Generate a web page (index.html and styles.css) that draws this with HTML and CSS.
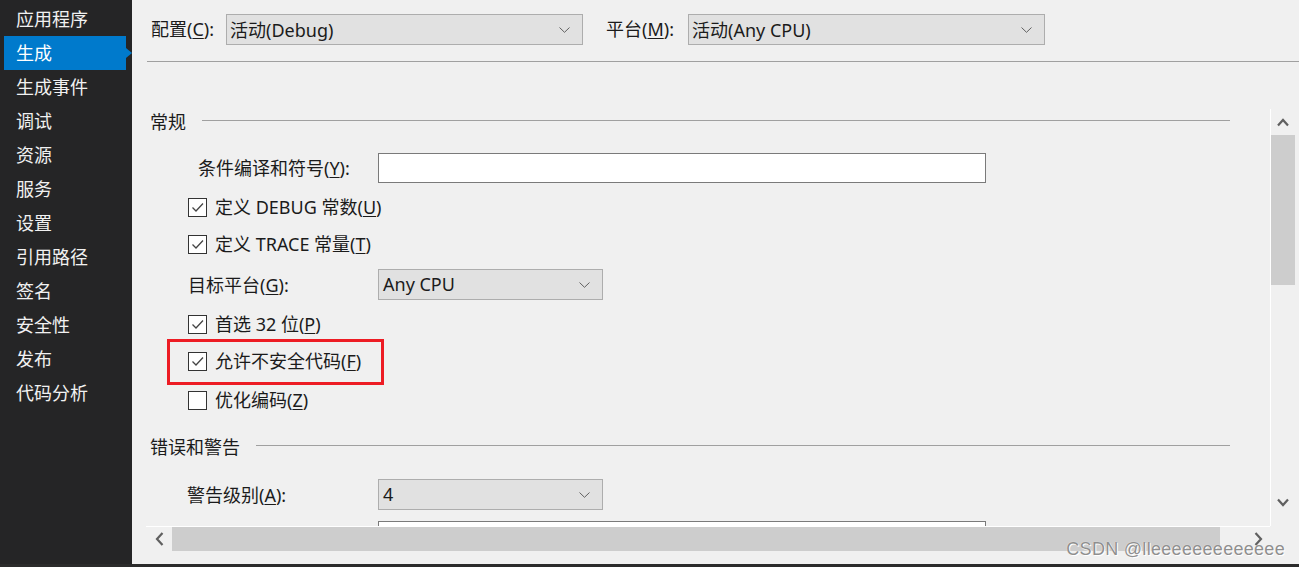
FILE: index.html
```html
<!DOCTYPE html>
<html lang="zh-CN">
<head>
<meta charset="utf-8">
<title>生成</title>
<link rel="stylesheet" href="styles.css">
</head>
<body>
<div class="window">
  <nav class="sidebar">
    <div class="nav-item">应用程序</div>
    <div class="nav-item active">生成</div>
    <div class="nav-item">生成事件</div>
    <div class="nav-item">调试</div>
    <div class="nav-item">资源</div>
    <div class="nav-item">服务</div>
    <div class="nav-item">设置</div>
    <div class="nav-item">引用路径</div>
    <div class="nav-item">签名</div>
    <div class="nav-item">安全性</div>
    <div class="nav-item">发布</div>
    <div class="nav-item">代码分析</div>
  </nav>
  <main class="main">
    <div class="topbar">
      <span class="top-label lbl-config">配置(<u>C</u>):</span>
      <div class="combo combo-top"><span>活动(Debug)</span><svg class="chev" width="11" height="6" viewBox="0 0 11 6"><polyline points="0.5,0.5 5.5,5.3 10.5,0.5" fill="none" stroke="#606060" stroke-width="1"/></svg></div>
      <span class="top-label lbl-platform">平台(<u>M</u>):</span>
      <div class="combo combo-top"><span>活动(Any CPU)</span><svg class="chev" width="11" height="6" viewBox="0 0 11 6"><polyline points="0.5,0.5 5.5,5.3 10.5,0.5" fill="none" stroke="#606060" stroke-width="1"/></svg></div>
    </div>
    <div class="sep"></div>
    <div class="frame">
      <div class="viewport">
        <div class="section"><span class="section-title">常规</span><span class="section-line"></span></div>
        <div class="row row-text">
          <span class="lbl lbl-define">条件编译和符号(<u>Y</u>):</span>
          <div class="textbox"></div>
        </div>
        <div class="row cb-row r-debug">
          <span class="cb checked"><svg width="17" height="17" viewBox="0 0 17 17"><polyline points="3.5,8.5 7,12 14,4.5" fill="none" stroke="#444" stroke-width="1.3"/></svg></span>
          <span class="cb-text">定义 DEBUG 常数(<u>U</u>)</span>
        </div>
        <div class="row cb-row r-trace">
          <span class="cb checked"><svg width="17" height="17" viewBox="0 0 17 17"><polyline points="3.5,8.5 7,12 14,4.5" fill="none" stroke="#444" stroke-width="1.3"/></svg></span>
          <span class="cb-text">定义 TRACE 常量(<u>T</u>)</span>
        </div>
        <div class="row row-combo r-target">
          <span class="lbl lbl-plain">目标平台(<u>G</u>):</span>
          <div class="combo combo-small"><span>Any CPU</span><svg class="chev" width="11" height="6" viewBox="0 0 11 6"><polyline points="0.5,0.5 5.5,5.3 10.5,0.5" fill="none" stroke="#606060" stroke-width="1"/></svg></div>
        </div>
        <div class="row cb-row r-prefer">
          <span class="cb checked"><svg width="17" height="17" viewBox="0 0 17 17"><polyline points="3.5,8.5 7,12 14,4.5" fill="none" stroke="#444" stroke-width="1.3"/></svg></span>
          <span class="cb-text">首选 32 位(<u>P</u>)</span>
        </div>
        <div class="row cb-row r-unsafe">
          <span class="cb checked"><svg width="17" height="17" viewBox="0 0 17 17"><polyline points="3.5,8.5 7,12 14,4.5" fill="none" stroke="#444" stroke-width="1.3"/></svg></span>
          <span class="cb-text">允许不安全代码(<u>F</u>)</span>
          <span class="highlight-box"></span>
        </div>
        <div class="row cb-row r-opt">
          <span class="cb"></span>
          <span class="cb-text">优化编码(<u>Z</u>)</span>
        </div>
        <div class="section section-2"><span class="section-title">错误和警告</span><span class="section-line"></span></div>
        <div class="row row-combo r-warn">
          <span class="lbl lbl-warn">警告级别(<u>A</u>):</span>
          <div class="combo combo-small"><span>4</span><svg class="chev" width="11" height="6" viewBox="0 0 11 6"><polyline points="0.5,0.5 5.5,5.3 10.5,0.5" fill="none" stroke="#606060" stroke-width="1"/></svg></div>
        </div>
        <div class="row row-text r-last">
          <span class="lbl lbl-empty"></span>
          <div class="textbox"></div>
        </div>
      </div>
      <div class="vscroll">
        <div class="arrow-box up"><svg width="12" height="9" viewBox="0 0 12 9"><polyline points="1,7.5 6,2 11,7.5" fill="none" stroke="#606060" stroke-width="2.2"/></svg></div>
        <div class="vthumb"></div>
        <div class="vtrack"></div>
        <div class="arrow-box down"><svg width="12" height="9" viewBox="0 0 12 9"><polyline points="1,1.5 6,7 11,1.5" fill="none" stroke="#606060" stroke-width="2.2"/></svg></div>
      </div>
    </div>
    <div class="hscroll">
      <div class="harrow left"><svg width="9" height="14" viewBox="0 0 9 14"><polyline points="7.5,1 2,7 7.5,13" fill="none" stroke="#606060" stroke-width="2.2"/></svg></div>
      <div class="hthumb"></div>
      <div class="htrack"></div>
      <div class="harrow right"><svg width="9" height="14" viewBox="0 0 9 14"><polyline points="1.5,1 7,7 1.5,13" fill="none" stroke="#606060" stroke-width="2.2"/></svg></div>
    </div>
    <div class="footer"></div>
    <div class="watermark">CSDN @lleeeeeeeeeeeee</div>
  </main>
</div>
</body>
</html>
```

FILE: styles.css
```css
* { box-sizing: border-box; }
html, body { margin: 0; padding: 0; }
body {
  background: #2b2b2b;
  width: 1299px;
  height: 567px;
  overflow: hidden;
  font-family: "Noto Sans", "Noto Sans CJK SC", sans-serif;
  font-size: 18px;
  color: #1b1b1b;
}
u { text-decoration-thickness: 1px; text-underline-offset: 2px; }

.window {
  display: flex;
  height: 564px;
}

/* Sidebar */
.sidebar {
  width: 132px;
  flex: 0 0 132px;
  background: #252526;
  padding-top: 2px;
}
.nav-item {
  height: 34px;
  line-height: 32px;
  padding-left: 16px;
  color: #f1f1f1;
  font-family: "Noto Sans CJK SC", sans-serif;
  font-size: 18px;
  position: relative;
  white-space: nowrap;
}
.nav-item.active {
  background: #007acc;
  margin-left: 4px;
  width: 122px;
  padding-left: 12px;
  color: #ffffff;
}
.nav-item.active::after {
  content: "";
  position: absolute;
  right: -6px;
  top: 12px;
  border-left: 6px solid #007acc;
  border-top: 5px solid transparent;
  border-bottom: 5px solid transparent;
}

/* Main */
.main {
  flex: 1;
  background: #f0f0f0;
  display: flex;
  flex-direction: column;
  position: relative;
}
.topbar {
  height: 61px;
  padding: 14px 0 0 19px;
  display: flex;
  align-items: flex-start;
}
.top-label {
  height: 31px;
  line-height: 30px;
  white-space: nowrap;
}
.lbl-config { width: 75px; }
.lbl-platform { width: 82px; margin-left: 23px; }

.combo {
  height: 31px;
  background: #e1e1e1;
  border: 1px solid #adadad;
  display: flex;
  align-items: center;
  justify-content: space-between;
  padding: 0 12px 2px 3px;
  white-space: nowrap;
}
.combo-top { width: 357px; }
.combo-small { width: 225px; padding-left: 4px; }
.chev { flex: 0 0 auto; margin-top: 2px; }

.sep {
  height: 1px;
  background: #a0a0a0;
  margin-left: 15px;
}

.frame {
  margin-top: 47px;
  margin-left: 14px;
  height: 417px;
  display: flex;
}
.viewport {
  flex: 1;
  overflow: hidden;
  position: relative;
}

.section {
  height: 26px;
  display: flex;
  align-items: center;
  padding-left: 4px;
}
.section-title { white-space: nowrap; font-family: "Noto Sans CJK SC", sans-serif; margin-top: -2px; }
.section-line {
  flex: 1;
  height: 1px;
  background: #a0a0a0;
  margin-left: 16px;
  margin-right: 40px;
  margin-top: -3px;
}
.section-2 { margin-top: 24px; }

.row {
  display: flex;
  align-items: center;
  white-space: nowrap;
  position: relative;
}
.row-text { height: 30px; margin-top: 18px; }
.lbl { flex: 0 0 auto; margin-top: -2px; }
.cb-text { margin-top: -2px; }
.lbl-define { width: 232px; padding-left: 52px; }
.lbl-plain { width: 232px; padding-left: 42px; }
.lbl-warn { width: 232px; padding-left: 41px; }
.lbl-empty { width: 232px; }
.textbox {
  width: 608px;
  height: 30px;
  background: #ffffff;
  border: 1px solid #7a7a7a;
}

.cb-row { height: 20px; padding-left: 42px; }
.cb {
  width: 19px;
  height: 19px;
  border: 1px solid #333333;
  background: #ffffff;
  margin-right: 8px;
  display: flex;
  align-items: center;
  justify-content: center;
  flex: 0 0 auto;
}
.r-debug { margin-top: 14px; }
.r-trace { margin-top: 17px; }
.row-combo { height: 31px; }
.r-target { margin-top: 15px; }
.r-prefer { margin-top: 14px; }
.r-unsafe { margin-top: 17px; }
.r-opt { margin-top: 19px; }
.r-warn { margin-top: 19px; }
.r-last { margin-top: 11px; }

.highlight-box {
  position: absolute;
  left: 21px;
  top: -12px;
  width: 217px;
  height: 46px;
  border: 3px solid #ed1c24;
}

/* Vertical scrollbar */
.vscroll {
  width: 29px;
  flex: 0 0 29px;
  border-left: 1px solid #ffffff;
  display: flex;
  flex-direction: column;
}
.arrow-box {
  height: 26px;
  display: flex;
  align-items: center;
  justify-content: center;
  padding-right: 4px;
}
.vthumb {
  height: 150px;
  width: 24px;
  background: #cdcdcd;
}
.vtrack { flex: 1; }
.arrow-box.down { height: 28px; align-items: flex-start; padding-top: 0; }

/* Horizontal scrollbar */
.hscroll {
  height: 25px;
  margin-left: 14px;
  margin-right: 29px;
  border-top: 1px solid #ffffff;
  display: flex;
  align-items: stretch;
}
.harrow {
  width: 26px;
  display: flex;
  align-items: center;
  justify-content: center;
}
.hthumb {
  width: 1048px;
  background: #cdcdcd;
}
.htrack { flex: 1; }
.harrow.right { width: 24px; justify-content: flex-start; padding-left: 8px; }

.footer { flex: 1; }

.watermark {
  position: absolute;
  right: 14px;
  bottom: 4px;
  font-family: "Liberation Sans", Arial, sans-serif;
  font-size: 18px;
  color: #8f8f8f;
  text-shadow: 0 0 1px #ffffff, 1px 1px 0 #ffffff;
  white-space: nowrap;
  letter-spacing: 0.3px;
}
```
